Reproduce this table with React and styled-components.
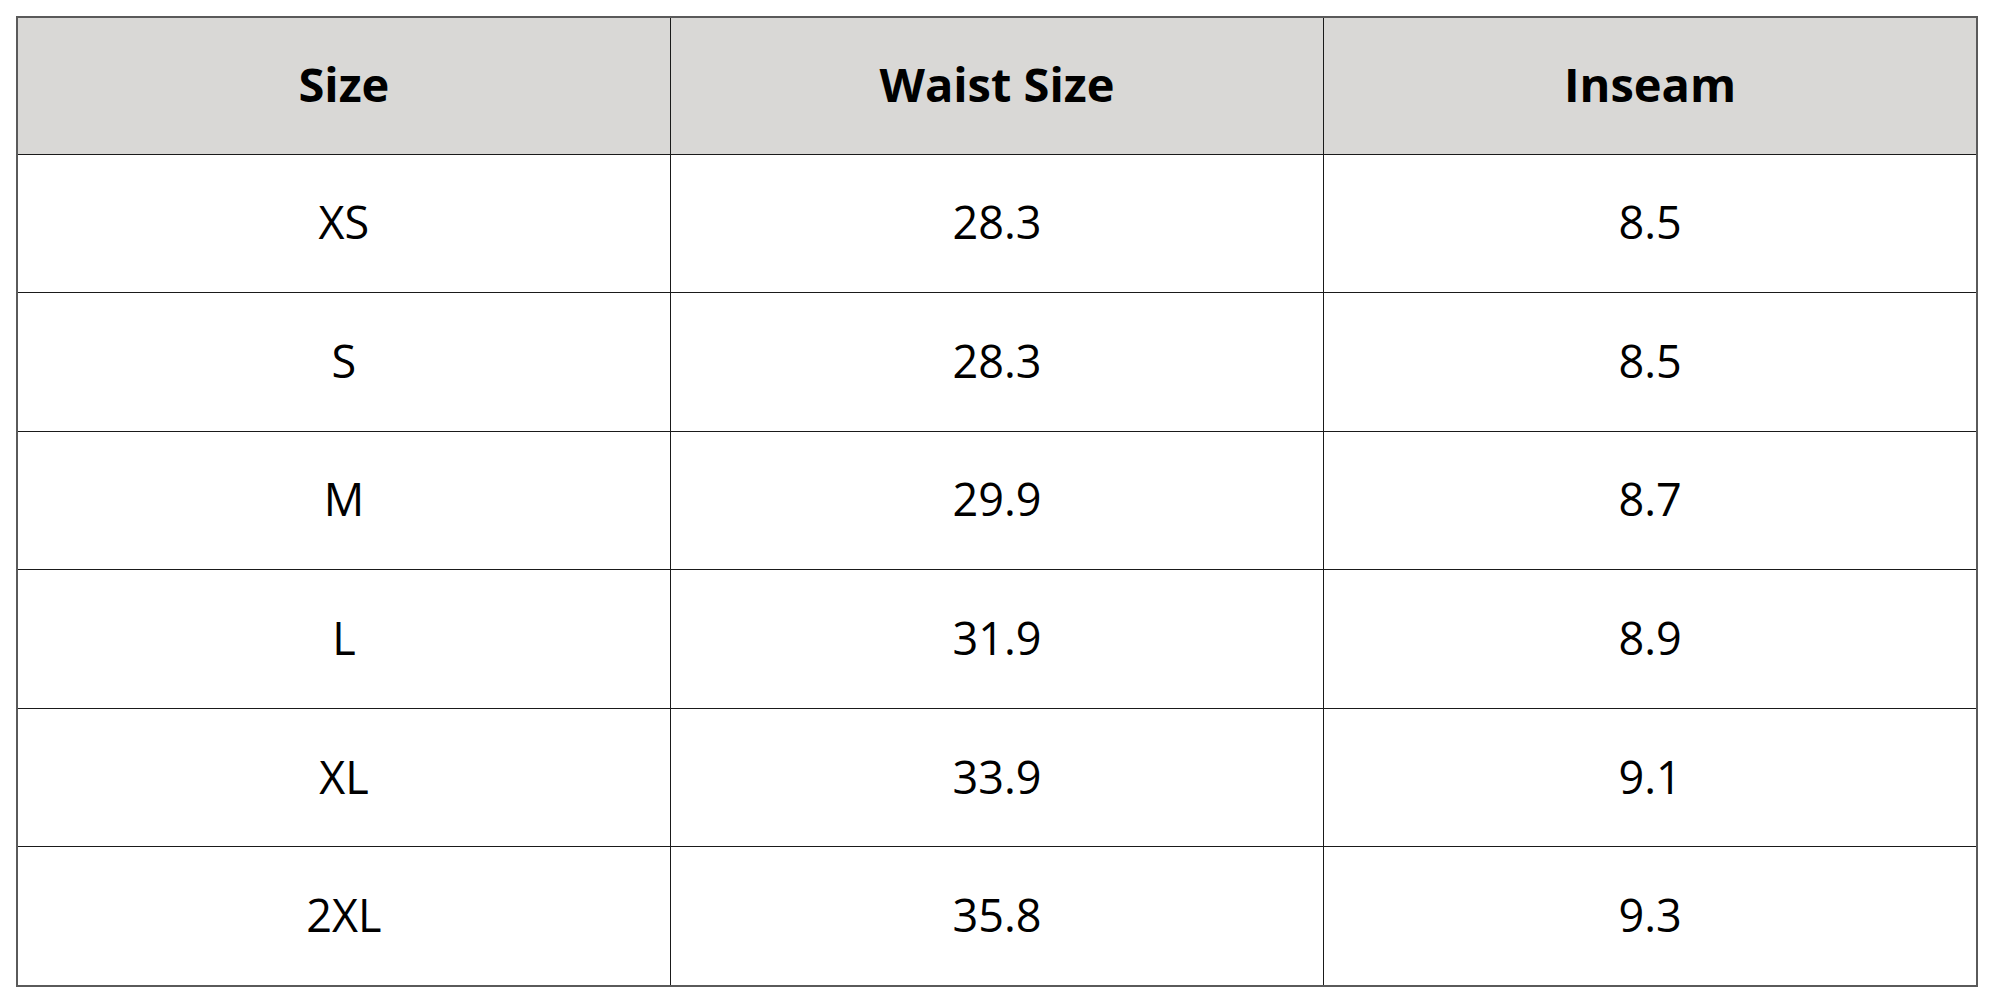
import React from "react";
import styled, { createGlobalStyle } from "styled-components";

const GlobalStyle = createGlobalStyle`
  html, body {
    margin: 0;
    padding: 0;
    background: #ffffff;
    font-family: "Open Sans", "Noto Sans", sans-serif;
  }
`;

const rows = [
  { size: "XS", waist: "28.3", inseam: "8.5" },
  { size: "S", waist: "28.3", inseam: "8.5" },
  { size: "M", waist: "29.9", inseam: "8.7" },
  { size: "L", waist: "31.9", inseam: "8.9" },
  { size: "XL", waist: "33.9", inseam: "9.1" },
  { size: "2XL", waist: "35.8", inseam: "9.3" },
];

const Page = styled.div`
  padding: 16px 22px 17px 16px;
`;

const Table = styled.table`
  width: 1962px;
  border-collapse: collapse;
  table-layout: fixed;
  border: 2px solid #5a5a5a;
`;

const HeadCell = styled.th`
  box-sizing: border-box;
  height: 137px;
  padding: 0 0 3px;
  background: #d9d8d6;
  border: 1.5px solid #1a1a1a;
  font-size: 47px;
  line-height: 1;
  font-weight: 700;
  color: #000;
  text-align: center;
  vertical-align: middle;
`;

const Cell = styled.td`
  box-sizing: border-box;
  height: 138.6px;
  padding: 0 0 3px;
  border: 1.5px solid #1a1a1a;
  font-size: 45px;
  line-height: 1;
  font-weight: 400;
  color: #000;
  text-align: center;
  vertical-align: middle;
`;

export default function App() {
  return (
    <Page>
      <GlobalStyle />
      <Table>
        <thead>
          <tr>
            <HeadCell>Size</HeadCell>
            <HeadCell>Waist Size</HeadCell>
            <HeadCell>Inseam</HeadCell>
          </tr>
        </thead>
        <tbody>
          {rows.map((r) => (
            <tr key={r.size}>
              <Cell>{r.size}</Cell>
              <Cell>{r.waist}</Cell>
              <Cell>{r.inseam}</Cell>
            </tr>
          ))}
        </tbody>
      </Table>
    </Page>
  );
}
